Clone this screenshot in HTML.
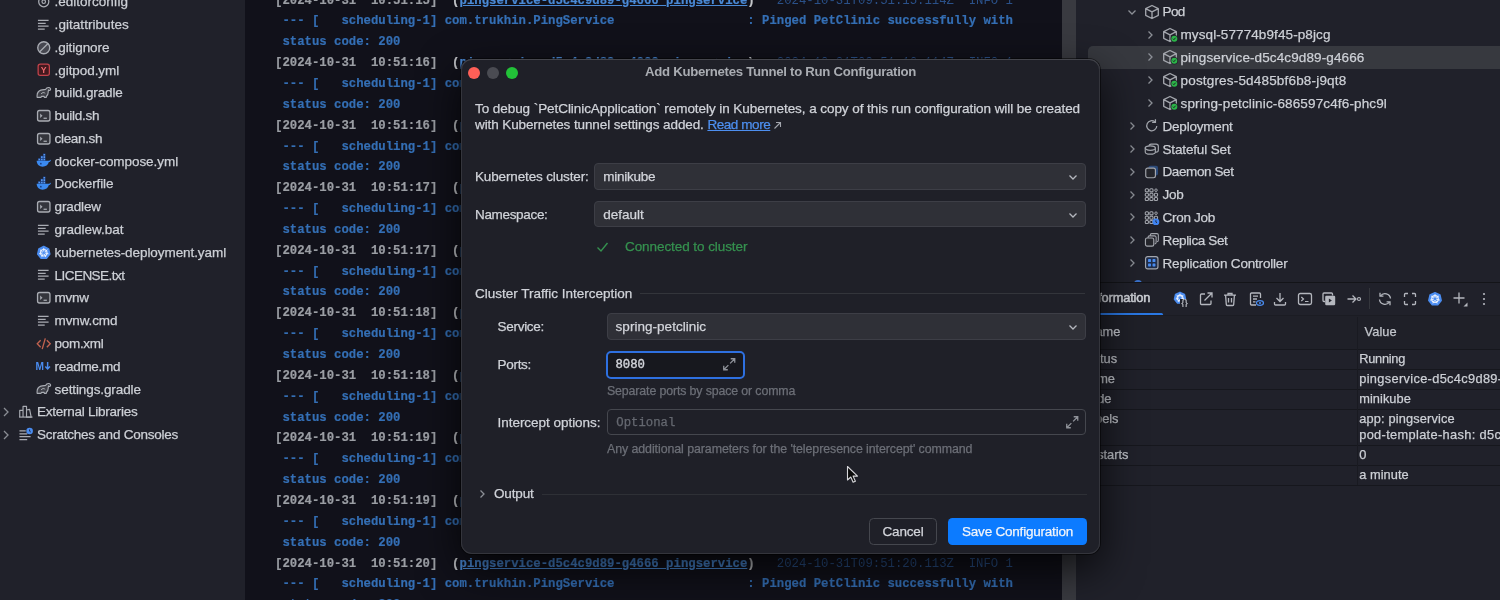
<!DOCTYPE html>
<html><head><meta charset="utf-8"><title>Add Kubernetes Tunnel to Run Configuration</title>
<style>
*{box-sizing:border-box;margin:0;padding:0}
html,body{width:1500px;height:600px;overflow:hidden;background:#11111a;font-family:"Liberation Sans",sans-serif;color:#c9ccd2}
#left{position:absolute;left:0;top:0;width:245px;height:600px;background:#20212a;overflow:hidden}
#con{position:absolute;left:245px;top:0;width:818px;height:600px;background:#11111a;overflow:hidden}
#sb{position:absolute;left:1062px;top:0;width:14px;height:600px;background:#393a40}
#right{position:absolute;left:1076px;top:0;width:425px;height:600px;background:#20212a;overflow:hidden}
.fr{position:absolute;height:23px;line-height:23px;font-size:13.3px;color:#c5c8ce;white-space:nowrap}
.fi{position:absolute;left:36.25px;width:15.5px;height:15.5px}
.cl{position:absolute;left:30px;height:21px;line-height:21px;font-family:"Liberation Mono",monospace;font-size:12.31px;white-space:pre;font-weight:bold}
.cl.a{color:#9b9ea4}
.cl.b{color:#346fb5}
.cl .p{color:#c4c6ca}
.cl .l{color:#4a8ad6;text-decoration:underline}
.cl .d{color:#346fb5}
#dlg{position:absolute;left:461px;top:59px;width:639px;height:495px;background:#1f2028;border-radius:11px;box-shadow:0 1px 0 #44454c inset,0 0 0 1px #34353c inset,0 0 0 1px rgba(0,0,0,.5),0 15px 43px rgba(0,0,0,.75)}
.t{position:absolute;height:20px;line-height:20px;white-space:pre}
#left,#con,#right,#dlg,#sb{will-change:transform}
.t{-webkit-text-stroke:0.25px}
.cl{-webkit-text-stroke:0.2px}
.cl .d{font-weight:normal;-webkit-text-stroke:0;color:#2a5088}

</style></head><body>
<div id="left">
<svg class="fi" style="top:-6.0px" viewBox="0 0 16 16"><circle cx="8" cy="8" r="5.2" stroke="#a9acb3" stroke-width="1.3" fill="none"/><circle cx="8" cy="8" r="1.8" stroke="#a9acb3" stroke-width="1.2" fill="none"/></svg>
<span class="t" style="left:54.6px;top:-7.8px;font-size:13.5px;color:#cdd0d6;letter-spacing:-0.003px;">.editorconfig</span>
<svg class="fi" style="top:16.7px" viewBox="0 0 16 16"><path d="M2 3.5h11M2 6.5h8M2 9.5h11M2 12.5h7" stroke="#a9acb3" stroke-width="1.3" fill="none"/></svg>
<span class="t" style="left:54.6px;top:15.0px;font-size:13.5px;color:#cdd0d6;letter-spacing:0.051px;">.gitattributes</span>
<svg class="fi" style="top:39.5px" viewBox="0 0 16 16"><circle cx="8" cy="8" r="6.200" stroke="#a9acb3" stroke-width="1.400" fill="rgba(169,172,179,.28)"/><path d="M3.600 12.400L12.400 3.600" stroke="#a9acb3" stroke-width="1.3"/></svg>
<span class="t" style="left:54.6px;top:37.8px;font-size:13.5px;color:#cdd0d6;letter-spacing:-0.079px;">.gitignore</span>
<svg class="fi" style="top:62.3px" viewBox="0 0 16 16"><rect x="2.200" y="2.200" width="11.600" height="11.600" rx="2.200" fill="#43191e" stroke="#c2434b" stroke-width="1.300"/><text x="8" y="11.300" font-family="Liberation Sans,sans-serif" font-size="9" font-weight="bold" fill="#ee6a70" text-anchor="middle">Y</text></svg>
<span class="t" style="left:54.6px;top:60.5px;font-size:13.5px;color:#cdd0d6;letter-spacing:-0.071px;">.gitpod.yml</span>
<svg class="fi" style="top:85.1px" viewBox="0 0 16 16"><path d="M1.200 12.800C.8 9.500 1.800 6.400 5 5.300c1.800-.6 3.500-.4 4.800-.6.800-1.500 2.200-2.300 3.600-2.100 1.400.3 2 1.600 1.400 2.600-.4.700-1.400.6-1.600-.2l-.6 1.400c.2 2.100-.6 4.100-1.800 5.200l-.2 1.200H8.600l-.2-1H5.600l-.4 1z" stroke="#a9acb3" stroke-width="1.150" fill="rgba(169,172,179,.22)" stroke-linejoin="round"/><path d="M5.300 9.300c.8-1.700 3-2 4.200-.7" stroke="#a9acb3" stroke-width="1" fill="none"/></svg>
<span class="t" style="left:54.6px;top:83.3px;font-size:13.5px;color:#cdd0d6;letter-spacing:-0.150px;">build.gradle</span>
<svg class="fi" style="top:107.9px" viewBox="0 0 16 16"><rect x="1.6" y="2.600" width="12.8" height="10.8" rx="2" stroke="#a9acb3" stroke-width="1.350" fill="#34353c"/><path d="M4.300 5.800l2.400 2.200-2.400 2.200z" fill="#a9acb3"/><path d="M7.800 10.600h3.400" stroke="#a9acb3" stroke-width="1.300" fill="none"/></svg>
<span class="t" style="left:54.6px;top:106.1px;font-size:13.5px;color:#cdd0d6;letter-spacing:-0.223px;">build.sh</span>
<svg class="fi" style="top:130.6px" viewBox="0 0 16 16"><rect x="1.6" y="2.600" width="12.8" height="10.8" rx="2" stroke="#a9acb3" stroke-width="1.350" fill="#34353c"/><path d="M4.300 5.800l2.400 2.200-2.400 2.200z" fill="#a9acb3"/><path d="M7.800 10.600h3.400" stroke="#a9acb3" stroke-width="1.300" fill="none"/></svg>
<span class="t" style="left:54.6px;top:128.9px;font-size:13.5px;color:#cdd0d6;letter-spacing:-0.348px;">clean.sh</span>
<svg class="fi" style="top:153.4px" viewBox="0 0 16 16"><path d="M2 5.400h7.800v2.800H2zM4.600 2.900h5.200v2.600H4.600zM7.200 0.600h2.600v2.500H7.200z" fill="#1c3f80"/><path d="M2.600 5.900h1.600v1.700H2.600zM5.200 5.900h1.600v1.700H5.200zM7.800 5.900h1.600v1.700H7.800zM5.200 3.400h1.600v1.700H5.200zM7.800 3.400h1.600v1.700H7.800zM7.800 1h1.600v1.700H7.800z" fill="#5a98ee"/><path d="M0.600 8.100h11.800c.9 0 1.700-.4 2.300-1 .2-.2.600-.1.600.3-.2 1.100-1 1.800-2 2-.9 3.200-3.200 4.700-6.400 4.700-3.400 0-5.700-1.700-6.300-6z" fill="#3b8af0"/><circle cx="5" cy="11" r=".9" fill="#1c3f80"/></svg>
<span class="t" style="left:54.6px;top:151.7px;font-size:13.5px;color:#cdd0d6;letter-spacing:-0.058px;">docker-compose.yml</span>
<svg class="fi" style="top:176.2px" viewBox="0 0 16 16"><path d="M2 5.400h7.800v2.800H2zM4.600 2.900h5.200v2.600H4.600zM7.200 0.600h2.600v2.500H7.200z" fill="#1c3f80"/><path d="M2.600 5.900h1.600v1.700H2.600zM5.200 5.900h1.600v1.700H5.200zM7.800 5.900h1.600v1.700H7.800zM5.200 3.400h1.600v1.700H5.200zM7.800 3.400h1.600v1.700H7.800zM7.800 1h1.600v1.700H7.800z" fill="#5a98ee"/><path d="M0.600 8.100h11.800c.9 0 1.700-.4 2.300-1 .2-.2.600-.1.600.3-.2 1.100-1 1.800-2 2-.9 3.200-3.200 4.700-6.400 4.700-3.400 0-5.700-1.700-6.300-6z" fill="#3b8af0"/><circle cx="5" cy="11" r=".9" fill="#1c3f80"/></svg>
<span class="t" style="left:54.6px;top:174.4px;font-size:13.5px;color:#cdd0d6;letter-spacing:-0.127px;">Dockerfile</span>
<svg class="fi" style="top:199.0px" viewBox="0 0 16 16"><rect x="1.6" y="2.600" width="12.8" height="10.8" rx="2" stroke="#a9acb3" stroke-width="1.350" fill="#34353c"/><path d="M4.300 5.800l2.400 2.200-2.400 2.200z" fill="#a9acb3"/><path d="M7.800 10.600h3.400" stroke="#a9acb3" stroke-width="1.300" fill="none"/></svg>
<span class="t" style="left:54.6px;top:197.2px;font-size:13.5px;color:#cdd0d6;letter-spacing:-0.147px;">gradlew</span>
<svg class="fi" style="top:221.8px" viewBox="0 0 16 16"><path d="M2 3.5h11M2 6.5h8M2 9.5h11M2 12.5h7" stroke="#a9acb3" stroke-width="1.3" fill="none"/></svg>
<span class="t" style="left:54.6px;top:220.0px;font-size:13.5px;color:#cdd0d6;letter-spacing:-0.005px;">gradlew.bat</span>
<svg class="fi" style="top:244.5px" viewBox="0 0 16 16"><polygon points="8.00,1.60 13.00,4.01 14.24,9.42 10.78,13.77 5.22,13.77 1.76,9.42 3.00,4.01" fill="#4a8cf0" stroke="#4a8cf0" stroke-width="1.600" stroke-linejoin="round"/><circle cx="8" cy="8" r="3.33" stroke="#e9f0fc" stroke-width="1.200" fill="none"/><path d="M8.00 6.70L8.00 3.01M9.02 7.19L11.90 4.89M9.27 8.29L12.87 9.11M8.56 9.17L10.17 12.50M7.44 9.17L5.83 12.50M6.73 8.29L3.13 9.11M6.98 7.19L4.10 4.89" stroke="#e9f0fc" stroke-width="1"/></svg>
<span class="t" style="left:54.6px;top:242.8px;font-size:13.5px;color:#cdd0d6;letter-spacing:-0.071px;">kubernetes-deployment.yaml</span>
<svg class="fi" style="top:267.3px" viewBox="0 0 16 16"><path d="M2 3.5h11M2 6.5h8M2 9.5h11M2 12.5h7" stroke="#a9acb3" stroke-width="1.3" fill="none"/></svg>
<span class="t" style="left:54.6px;top:265.6px;font-size:13.5px;color:#cdd0d6;letter-spacing:-0.548px;">LICENSE.txt</span>
<svg class="fi" style="top:290.1px" viewBox="0 0 16 16"><rect x="1.6" y="2.600" width="12.8" height="10.8" rx="2" stroke="#a9acb3" stroke-width="1.350" fill="#34353c"/><path d="M4.300 5.800l2.400 2.200-2.400 2.200z" fill="#a9acb3"/><path d="M7.800 10.600h3.400" stroke="#a9acb3" stroke-width="1.300" fill="none"/></svg>
<span class="t" style="left:54.6px;top:288.3px;font-size:13.5px;color:#cdd0d6;letter-spacing:-0.251px;">mvnw</span>
<svg class="fi" style="top:312.9px" viewBox="0 0 16 16"><path d="M2 3.5h11M2 6.5h8M2 9.5h11M2 12.5h7" stroke="#a9acb3" stroke-width="1.3" fill="none"/></svg>
<span class="t" style="left:54.6px;top:311.1px;font-size:13.5px;color:#cdd0d6;letter-spacing:-0.127px;">mvnw.cmd</span>
<svg class="fi" style="top:335.7px" viewBox="0 0 16 16"><path d="M4.800 4.300L1.300 8l3.500 3.700M11.200 4.300L14.700 8l-3.500 3.700M9.600 2.500L6.400 13.500" stroke="#c0624f" stroke-width="1.4" fill="none"/></svg>
<span class="t" style="left:54.6px;top:333.9px;font-size:13.5px;color:#cdd0d6;letter-spacing:-0.323px;">pom.xml</span>
<svg class="fi" style="top:358.4px" viewBox="0 0 16 16"><text x="-0.500" y="12" font-family="Liberation Sans,sans-serif" font-size="10.5" font-weight="bold" fill="#4a8cf0">M</text><path d="M12 4v7.200M9.600 8.800l2.400 2.600 2.400-2.600" stroke="#4a8cf0" stroke-width="1.500" fill="none"/></svg>
<span class="t" style="left:54.6px;top:356.7px;font-size:13.5px;color:#cdd0d6;letter-spacing:-0.309px;">readme.md</span>
<svg class="fi" style="top:381.2px" viewBox="0 0 16 16"><path d="M1.200 12.800C.8 9.500 1.800 6.400 5 5.300c1.800-.6 3.500-.4 4.800-.6.800-1.500 2.200-2.300 3.600-2.100 1.400.3 2 1.600 1.400 2.600-.4.700-1.400.6-1.600-.2l-.6 1.400c.2 2.100-.6 4.100-1.800 5.200l-.2 1.200H8.600l-.2-1H5.600l-.4 1z" stroke="#a9acb3" stroke-width="1.150" fill="rgba(169,172,179,.22)" stroke-linejoin="round"/><path d="M5.300 9.300c.8-1.700 3-2 4.200-.7" stroke="#a9acb3" stroke-width="1" fill="none"/></svg>
<span class="t" style="left:54.6px;top:379.5px;font-size:13.5px;color:#cdd0d6;letter-spacing:-0.104px;">settings.gradle</span>
<svg class="fi" style="left:18.300px;top:404.0px" viewBox="0 0 16 16"><path d="M1.800 13.500V6.500h3.400v7M5.200 13.500V2.500h3.600v11M8.800 13.500V6.200l3.200-.6 1.600 7.900z" stroke="#a9acb3" stroke-width="1.200" fill="none" stroke-linejoin="round"/><path d="M1 13.500h14" stroke="#a9acb3" stroke-width="1.200"/></svg>
<span class="t" style="left:37.0px;top:402.2px;font-size:13.5px;color:#cdd0d6;letter-spacing:-0.253px;">External Libraries</span>
<svg style="position:absolute;left:1px;top:406.74px;width:10px;height:10px" viewBox="0 0 10 10"><path d="M3 1l4 4-4 4" stroke="#8a8d94" stroke-width="1.300" fill="none"/></svg>
<svg class="fi" style="left:18.300px;top:426.8px" viewBox="0 0 16 16"><path d="M1.500 4h6.500M1.500 7h8M1.500 10h11.500M1.500 13h8" stroke="#a9acb3" stroke-width="1.300" fill="none"/><circle cx="12" cy="4.200" r="3.400" fill="#4a8cf0"/><path d="M12 2.500v1.900l1.200.8" stroke="#20212a" stroke-width=".9" fill="none"/></svg>
<span class="t" style="left:37.0px;top:425.0px;font-size:13.5px;color:#cdd0d6;letter-spacing:-0.242px;">Scratches and Consoles</span>
<svg style="position:absolute;left:1px;top:429.52000000000004px;width:10px;height:10px" viewBox="0 0 10 10"><path d="M3 1l4 4-4 4" stroke="#8a8d94" stroke-width="1.300" fill="none"/></svg>
</div>
<div id="con">
<div class="cl a" style="top:-9.5px">[2024-10-31  10:51:15]  <span class="p">(</span><span class="l">pingservice-d5c4c9d89-g4666 pingservice</span><span class="p">)</span>   <span class="d">2024-10-31T09:51:15.114Z  INFO 1</span></div>
<div class="cl b" style="top:11.4px"> --- [   scheduling-1] com.trukhin.PingService                  : Pinged PetClinic successfully with</div>
<div class="cl b" style="top:32.2px"> status code: 200</div>
<div class="cl a" style="top:53.1px">[2024-10-31  10:51:16]  <span class="p">(</span><span class="l">pingservice-d5c4c9d89-g4666 pingservice</span><span class="p">)</span>   <span class="d">2024-10-31T09:51:16.114Z  INFO 1</span></div>
<div class="cl b" style="top:73.9px"> --- [   scheduling-1] com.trukhin.PingService                  : Pinged PetClinic successfully with</div>
<div class="cl b" style="top:94.8px"> status code: 200</div>
<div class="cl a" style="top:115.6px">[2024-10-31  10:51:16]  <span class="p">(</span><span class="l">pingservice-d5c4c9d89-g4666 pingservice</span><span class="p">)</span>   <span class="d">2024-10-31T09:51:16.114Z  INFO 1</span></div>
<div class="cl b" style="top:136.5px"> --- [   scheduling-1] com.trukhin.PingService                  : Pinged PetClinic successfully with</div>
<div class="cl b" style="top:157.3px"> status code: 200</div>
<div class="cl a" style="top:178.2px">[2024-10-31  10:51:17]  <span class="p">(</span><span class="l">pingservice-d5c4c9d89-g4666 pingservice</span><span class="p">)</span>   <span class="d">2024-10-31T09:51:17.114Z  INFO 1</span></div>
<div class="cl b" style="top:199.0px"> --- [   scheduling-1] com.trukhin.PingService                  : Pinged PetClinic successfully with</div>
<div class="cl b" style="top:219.9px"> status code: 200</div>
<div class="cl a" style="top:240.7px">[2024-10-31  10:51:17]  <span class="p">(</span><span class="l">pingservice-d5c4c9d89-g4666 pingservice</span><span class="p">)</span>   <span class="d">2024-10-31T09:51:17.114Z  INFO 1</span></div>
<div class="cl b" style="top:261.6px"> --- [   scheduling-1] com.trukhin.PingService                  : Pinged PetClinic successfully with</div>
<div class="cl b" style="top:282.4px"> status code: 200</div>
<div class="cl a" style="top:303.2px">[2024-10-31  10:51:18]  <span class="p">(</span><span class="l">pingservice-d5c4c9d89-g4666 pingservice</span><span class="p">)</span>   <span class="d">2024-10-31T09:51:18.114Z  INFO 1</span></div>
<div class="cl b" style="top:324.1px"> --- [   scheduling-1] com.trukhin.PingService                  : Pinged PetClinic successfully with</div>
<div class="cl b" style="top:344.9px"> status code: 200</div>
<div class="cl a" style="top:365.8px">[2024-10-31  10:51:18]  <span class="p">(</span><span class="l">pingservice-d5c4c9d89-g4666 pingservice</span><span class="p">)</span>   <span class="d">2024-10-31T09:51:18.114Z  INFO 1</span></div>
<div class="cl b" style="top:386.7px"> --- [   scheduling-1] com.trukhin.PingService                  : Pinged PetClinic successfully with</div>
<div class="cl b" style="top:407.5px"> status code: 200</div>
<div class="cl a" style="top:428.4px">[2024-10-31  10:51:19]  <span class="p">(</span><span class="l">pingservice-d5c4c9d89-g4666 pingservice</span><span class="p">)</span>   <span class="d">2024-10-31T09:51:19.114Z  INFO 1</span></div>
<div class="cl b" style="top:449.2px"> --- [   scheduling-1] com.trukhin.PingService                  : Pinged PetClinic successfully with</div>
<div class="cl b" style="top:470.1px"> status code: 200</div>
<div class="cl a" style="top:490.9px">[2024-10-31  10:51:19]  <span class="p">(</span><span class="l">pingservice-d5c4c9d89-g4666 pingservice</span><span class="p">)</span>   <span class="d">2024-10-31T09:51:19.114Z  INFO 1</span></div>
<div class="cl b" style="top:511.8px"> --- [   scheduling-1] com.trukhin.PingService                  : Pinged PetClinic successfully with</div>
<div class="cl b" style="top:532.6px"> status code: 200</div>
<div class="cl a" style="top:553.5px">[2024-10-31  10:51:20]  <span class="p">(</span><span class="l">pingservice-d5c4c9d89-g4666 pingservice</span><span class="p">)</span>   <span class="d">2024-10-31T09:51:20.113Z  INFO 1</span></div>
<div class="cl b" style="top:574.3px"> --- [   scheduling-1] com.trukhin.PingService                  : Pinged PetClinic successfully with</div>
<div class="cl b" style="top:595.2px"> status code: 200</div>
</div>
<div id="sb"></div>
<div id="right">
<div style="position:absolute;left:-1076px;top:0">
<div style="position:absolute;left:1088px;top:46px;width:420px;height:23px;background:#37393f;border-radius:5px 0 0 5px"></div>
<svg style="position:absolute;left:1126.7px;top:6.7px;width:10px;height:10px" viewBox="0 0 10 10"><path d="M1.5 3.500l3.500 3.500 3.500-3.500" stroke="#8c8f96" stroke-width="1.300" fill="none"/></svg>
<svg style="position:absolute;left:1144.2px;top:3.7px;width:16px;height:16px" viewBox="0 0 16 16"><path d="M8 1.500l6.300 3.200v6.600L8 14.500l-6.300-3.200V4.700z M1.700 4.700L8 7.900l6.300-3.200M8 7.900v6.600" stroke="#a3a6ad" stroke-width="1.350" fill="none" stroke-linejoin="round"/></svg>
<span class="t" style="left:1162.5px;top:2.4px;font-size:13.5px;color:#cdd0d6;letter-spacing:-0.607px;">Pod</span>
<svg style="position:absolute;left:1144.7px;top:29.5px;width:10px;height:10px" viewBox="0 0 10 10"><path d="M3.500 1.500l3.500 3.500-3.500 3.500" stroke="#8c8f96" stroke-width="1.300" fill="none"/></svg>
<svg style="position:absolute;left:1162.2px;top:26.5px;width:16px;height:16px" viewBox="0 0 16 16"><path d="M8 1.500l6.300 3.200v6.600L8 14.500l-6.300-3.200V4.700z M1.700 4.700L8 7.900l6.300-3.200M8 7.900v6.600" stroke="#a3a6ad" stroke-width="1.350" fill="none" stroke-linejoin="round"/><circle cx="12.300" cy="11.700" r="3.700" fill="#20212a"/><circle cx="12.300" cy="11.700" r="3" fill="#2bb548"/><path d="M10.900 11.700l1 1 1.700-2" stroke="#20212a" stroke-width="1" fill="none"/></svg>
<span class="t" style="left:1180.5px;top:25.2px;font-size:13.5px;color:#cdd0d6;letter-spacing:0.098px;">mysql-57774b9f45-p8jcg</span>
<svg style="position:absolute;left:1144.7px;top:52.4px;width:10px;height:10px" viewBox="0 0 10 10"><path d="M3.500 1.500l3.500 3.500-3.500 3.500" stroke="#8c8f96" stroke-width="1.300" fill="none"/></svg>
<svg style="position:absolute;left:1162.2px;top:49.4px;width:16px;height:16px" viewBox="0 0 16 16"><path d="M8 1.500l6.300 3.200v6.600L8 14.500l-6.300-3.200V4.700z M1.700 4.700L8 7.900l6.300-3.200M8 7.900v6.600" stroke="#a3a6ad" stroke-width="1.350" fill="none" stroke-linejoin="round"/><circle cx="12.300" cy="11.700" r="3.700" fill="#20212a"/><circle cx="12.300" cy="11.700" r="3" fill="#2bb548"/><path d="M10.900 11.700l1 1 1.700-2" stroke="#20212a" stroke-width="1" fill="none"/></svg>
<span class="t" style="left:1180.5px;top:48.1px;font-size:13.5px;color:#cdd0d6;letter-spacing:0.112px;">pingservice-d5c4c9d89-g4666</span>
<svg style="position:absolute;left:1144.7px;top:75.3px;width:10px;height:10px" viewBox="0 0 10 10"><path d="M3.500 1.500l3.500 3.500-3.500 3.500" stroke="#8c8f96" stroke-width="1.300" fill="none"/></svg>
<svg style="position:absolute;left:1162.2px;top:72.3px;width:16px;height:16px" viewBox="0 0 16 16"><path d="M8 1.500l6.300 3.200v6.600L8 14.500l-6.300-3.200V4.700z M1.700 4.700L8 7.900l6.300-3.200M8 7.900v6.600" stroke="#a3a6ad" stroke-width="1.350" fill="none" stroke-linejoin="round"/><circle cx="12.300" cy="11.700" r="3.700" fill="#20212a"/><circle cx="12.300" cy="11.700" r="3" fill="#2bb548"/><path d="M10.900 11.700l1 1 1.700-2" stroke="#20212a" stroke-width="1" fill="none"/></svg>
<span class="t" style="left:1180.5px;top:71.0px;font-size:13.5px;color:#cdd0d6;letter-spacing:0.181px;">postgres-5d485bf6b8-j9qt8</span>
<svg style="position:absolute;left:1144.7px;top:98.1px;width:10px;height:10px" viewBox="0 0 10 10"><path d="M3.500 1.500l3.500 3.500-3.500 3.500" stroke="#8c8f96" stroke-width="1.300" fill="none"/></svg>
<svg style="position:absolute;left:1162.2px;top:95.1px;width:16px;height:16px" viewBox="0 0 16 16"><path d="M8 1.500l6.300 3.200v6.600L8 14.500l-6.300-3.200V4.700z M1.700 4.700L8 7.900l6.300-3.200M8 7.900v6.600" stroke="#a3a6ad" stroke-width="1.350" fill="none" stroke-linejoin="round"/><circle cx="12.300" cy="11.700" r="3.700" fill="#20212a"/><circle cx="12.300" cy="11.700" r="3" fill="#2bb548"/><path d="M10.900 11.700l1 1 1.700-2" stroke="#20212a" stroke-width="1" fill="none"/></svg>
<span class="t" style="left:1180.5px;top:93.8px;font-size:13.5px;color:#cdd0d6;letter-spacing:0.140px;">spring-petclinic-686597c4f6-phc9l</span>
<svg style="position:absolute;left:1126.7px;top:121.0px;width:10px;height:10px" viewBox="0 0 10 10"><path d="M3.500 1.500l3.500 3.500-3.500 3.500" stroke="#8c8f96" stroke-width="1.300" fill="none"/></svg>
<svg style="position:absolute;left:1144.0px;top:118.2px;width:15.5px;height:15.5px" viewBox="0 0 16 16"><path d="M13.200 8.300a5.200 5.200 0 1 1-1.900-4.300" stroke="#a3a6ad" stroke-width="1.300" fill="none"/><path d="M11.800 1.200v3.400H8.400" stroke="#a3a6ad" stroke-width="1.300" fill="none"/></svg>
<span class="t" style="left:1162.5px;top:116.7px;font-size:13.5px;color:#cdd0d6;letter-spacing:-0.204px;">Deployment</span>
<svg style="position:absolute;left:1126.7px;top:143.8px;width:10px;height:10px" viewBox="0 0 10 10"><path d="M3.500 1.500l3.500 3.500-3.500 3.500" stroke="#8c8f96" stroke-width="1.300" fill="none"/></svg>
<svg style="position:absolute;left:1144.0px;top:141.1px;width:15.5px;height:15.5px" viewBox="0 0 16 16"><rect x="5.200" y="3.200" width="9.600" height="8.200" rx="2.200" stroke="#a3a6ad" stroke-width="1.200" fill="none"/><path d="M1.300 7.300v4c0 1.300 2.300 2.300 5.200 2.300s5.200-1 5.200-2.300v-4z" fill="#20212a" stroke="#a3a6ad" stroke-width="1.200"/><ellipse cx="6.500" cy="7.300" rx="5.200" ry="2.300" stroke="#a3a6ad" stroke-width="1.200" fill="#20212a"/></svg>
<span class="t" style="left:1162.5px;top:139.5px;font-size:13.5px;color:#cdd0d6;letter-spacing:-0.150px;">Stateful Set</span>
<svg style="position:absolute;left:1126.7px;top:166.7px;width:10px;height:10px" viewBox="0 0 10 10"><path d="M3.500 1.500l3.500 3.500-3.500 3.500" stroke="#8c8f96" stroke-width="1.300" fill="none"/></svg>
<svg style="position:absolute;left:1144.0px;top:163.9px;width:15.5px;height:15.5px" viewBox="0 0 16 16"><rect x="4.500" y="1.800" width="10" height="10" rx="2" fill="#2c4a78"/><rect x="1.800" y="4.200" width="10" height="10" rx="2" stroke="#a3a6ad" stroke-width="1.200" fill="#25262c"/></svg>
<span class="t" style="left:1162.5px;top:162.3px;font-size:13.5px;color:#cdd0d6;letter-spacing:-0.404px;">Daemon Set</span>
<svg style="position:absolute;left:1126.7px;top:189.5px;width:10px;height:10px" viewBox="0 0 10 10"><path d="M3.500 1.500l3.500 3.500-3.500 3.500" stroke="#8c8f96" stroke-width="1.300" fill="none"/></svg>
<svg style="position:absolute;left:1144.0px;top:186.8px;width:15.5px;height:15.5px" viewBox="0 0 16 16"><rect x="1.3" y="1.9" width="3.300" height="3.100" rx="1" stroke="#a3a6ad" stroke-width="1.100" fill="none"/><rect x="6.0" y="1.9" width="3.300" height="3.100" rx="1" stroke="#a3a6ad" stroke-width="1.100" fill="none"/><rect x="1.3" y="6.4" width="3.300" height="3.100" rx="1" stroke="#a3a6ad" stroke-width="1.100" fill="none"/><rect x="6.0" y="6.4" width="3.300" height="3.100" rx="1" stroke="#a3a6ad" stroke-width="1.100" fill="none"/><rect x="10.7" y="6.4" width="3.300" height="3.100" rx="1" stroke="#a3a6ad" stroke-width="1.100" fill="none"/><rect x="1.3" y="10.9" width="3.300" height="3.100" rx="1" stroke="#a3a6ad" stroke-width="1.100" fill="none"/><rect x="6.0" y="10.9" width="3.300" height="3.100" rx="1" stroke="#a3a6ad" stroke-width="1.100" fill="none"/><rect x="10.7" y="10.9" width="3.300" height="3.100" rx="1" stroke="#a3a6ad" stroke-width="1.100" fill="none"/><circle cx="12.400" cy="3.300" r="1.300" stroke="#a3a6ad" stroke-width="1" fill="none"/></svg>
<span class="t" style="left:1162.5px;top:185.2px;font-size:13.5px;color:#cdd0d6;letter-spacing:-0.255px;">Job</span>
<svg style="position:absolute;left:1126.7px;top:212.3px;width:10px;height:10px" viewBox="0 0 10 10"><path d="M3.500 1.500l3.500 3.500-3.500 3.500" stroke="#8c8f96" stroke-width="1.300" fill="none"/></svg>
<svg style="position:absolute;left:1144.0px;top:209.6px;width:15.5px;height:15.5px" viewBox="0 0 16 16"><rect x="1.3" y="1.9" width="3.300" height="3.100" rx="1" stroke="#a3a6ad" stroke-width="1.100" fill="none"/><rect x="6.0" y="1.9" width="3.300" height="3.100" rx="1" stroke="#a3a6ad" stroke-width="1.100" fill="none"/><rect x="1.3" y="6.4" width="3.300" height="3.100" rx="1" stroke="#a3a6ad" stroke-width="1.100" fill="none"/><rect x="6.0" y="6.4" width="3.300" height="3.100" rx="1" stroke="#a3a6ad" stroke-width="1.100" fill="none"/><rect x="10.7" y="6.4" width="3.300" height="3.100" rx="1" stroke="#a3a6ad" stroke-width="1.100" fill="none"/><rect x="1.3" y="10.9" width="3.300" height="3.100" rx="1" stroke="#a3a6ad" stroke-width="1.100" fill="none"/><rect x="6.0" y="10.9" width="3.300" height="3.100" rx="1" stroke="#a3a6ad" stroke-width="1.100" fill="none"/><circle cx="12.400" cy="3.300" r="1.300" stroke="#a3a6ad" stroke-width="1" fill="none"/><circle cx="12.300" cy="12.300" r="3.500" fill="#3f83f0"/><path d="M12.300 10.600v1.900l1.100.7" stroke="#20212a" stroke-width=".9" fill="none"/></svg>
<span class="t" style="left:1162.5px;top:208.0px;font-size:13.5px;color:#cdd0d6;letter-spacing:-0.285px;">Cron Job</span>
<svg style="position:absolute;left:1126.7px;top:235.2px;width:10px;height:10px" viewBox="0 0 10 10"><path d="M3.500 1.500l3.500 3.500-3.500 3.500" stroke="#8c8f96" stroke-width="1.300" fill="none"/></svg>
<svg style="position:absolute;left:1144.0px;top:232.4px;width:15.5px;height:15.5px" viewBox="0 0 16 16"><path d="M6.500 4V3.200a1.500 1.500 0 0 1 1.500-1.500h5.300a1.500 1.500 0 0 1 1.500 1.500v5.300a1.500 1.500 0 0 1-1.500 1.500" stroke="#a3a6ad" stroke-width="1.100" fill="none"/><path d="M4.200 6.200V5.500a1.500 1.500 0 0 1 1.500-1.500h5.300a1.500 1.500 0 0 1 1.500 1.500v5.300a1.500 1.500 0 0 1-1.500 1.500" stroke="#a3a6ad" stroke-width="1.100" fill="none"/><rect x="1.500" y="6.200" width="8.600" height="8.300" rx="1.700" stroke="#a3a6ad" stroke-width="1.200" fill="#25262c"/></svg>
<span class="t" style="left:1162.5px;top:230.9px;font-size:13.5px;color:#cdd0d6;letter-spacing:-0.367px;">Replica Set</span>
<svg style="position:absolute;left:1126.7px;top:258.1px;width:10px;height:10px" viewBox="0 0 10 10"><path d="M3.500 1.500l3.500 3.500-3.500 3.500" stroke="#8c8f96" stroke-width="1.300" fill="none"/></svg>
<svg style="position:absolute;left:1144.0px;top:255.3px;width:15.5px;height:15.5px" viewBox="0 0 16 16"><rect x="1.600" y="1.600" width="12.800" height="12.800" rx="2.200" stroke="#a3a6ad" stroke-width="1.200" fill="#1f2d4a"/><rect x="4.200" y="4.200" width="3" height="3" rx=".6" fill="#4a8cf0"/><rect x="8.800" y="4.200" width="3" height="3" rx=".6" fill="#4a8cf0"/><rect x="4.200" y="8.800" width="3" height="3" rx=".6" fill="#4a8cf0"/><rect x="8.800" y="8.800" width="3" height="3" rx=".6" fill="#4a8cf0"/></svg>
<span class="t" style="left:1162.5px;top:253.8px;font-size:13.5px;color:#cdd0d6;letter-spacing:-0.185px;">Replication Controller</span>
<div style="position:absolute;left:1134px;top:279.500px;width:8px;height:4px;border-radius:4px 4px 0 0;background:#3a72cc"></div>
<div style="position:absolute;left:1075px;top:282px;width:425px;height:318px;background:#20212a;border-top:1px solid #131418"></div>
<span class="t" style="left:1087.8px;top:287.8px;font-size:12.8px;color:#cfd2d8;letter-spacing:-0.148px;-webkit-text-stroke:0.5px;">Information</span>
<div style="position:absolute;left:1076px;top:312.700px;width:86.500px;height:3.400px;background:#2a78e4;border-radius:2px"></div>
<div style="position:absolute;left:1075px;top:315px;width:425px;height:1px;background:#1b1c23"></div>
<div style="position:absolute;left:1075px;top:316px;width:425px;height:33px;background:#1f2028"></div>
<div style="position:absolute;left:1075px;top:348.5px;width:425px;height:1px;background:#16171d"></div>
<div style="position:absolute;left:1075px;top:368.6px;width:425px;height:1px;background:#16171d"></div>
<div style="position:absolute;left:1075px;top:388.8px;width:425px;height:1px;background:#16171d"></div>
<div style="position:absolute;left:1075px;top:408.6px;width:425px;height:1px;background:#16171d"></div>
<div style="position:absolute;left:1075px;top:444.9px;width:425px;height:1px;background:#16171d"></div>
<div style="position:absolute;left:1075px;top:464.7px;width:425px;height:1px;background:#16171d"></div>
<div style="position:absolute;left:1075px;top:484.5px;width:425px;height:1px;background:#16171d"></div>
<div style="position:absolute;left:1357px;top:317px;width:1px;height:168px;background:#191a21"></div>
<span class="t" style="left:1086.2px;top:322.3px;font-size:12.8px;color:#c3c6cc;">Name</span>
<span class="t" style="left:1364.6px;top:322.3px;font-size:12.8px;color:#c3c6cc;letter-spacing:0.042px;">Value</span>
<span class="t" style="left:1080.8px;top:349.2px;font-size:12.8px;color:#c3c6cc;">Status</span>
<span class="t" style="left:1359.2px;top:349.2px;font-size:12.8px;color:#cdd0d6;letter-spacing:-0.255px;">Running</span>
<span class="t" style="left:1080.8px;top:369.0px;font-size:12.8px;color:#c3c6cc;">Name</span>
<span class="t" style="left:1359.2px;top:369.0px;font-size:12.8px;color:#cdd0d6;letter-spacing:0.334px;">pingservice-d5c4c9d89-g4666</span>
<span class="t" style="left:1080.8px;top:388.8px;font-size:12.8px;color:#c3c6cc;">Node</span>
<span class="t" style="left:1359.2px;top:388.8px;font-size:12.8px;color:#cdd0d6;letter-spacing:0.059px;">minikube</span>
<span class="t" style="left:1080.8px;top:408.6px;font-size:12.8px;color:#c3c6cc;">Labels</span>
<span class="t" style="left:1359.2px;top:408.6px;font-size:12.8px;color:#cdd0d6;letter-spacing:0.155px;">app: pingservice</span>
<span class="t" style="left:1359.2px;top:424.6px;font-size:12.8px;color:#cdd0d6;letter-spacing:0.340px;">pod-template-hash: d5c4c9d89</span>
<span class="t" style="left:1080.8px;top:444.8px;font-size:12.8px;color:#c3c6cc;">Restarts</span>
<span class="t" style="left:1359.2px;top:444.8px;font-size:12.8px;color:#cdd0d6;letter-spacing:0.051px;">0</span>
<span class="t" style="left:1359.2px;top:464.6px;font-size:12.8px;color:#cdd0d6;letter-spacing:0.051px;">a minute</span>
<svg style="position:absolute;left:1173.3px;top:290.7px;width:16px;height:16px" viewBox="0 0 16 16"><polygon points="7.00,1.40 11.38,3.51 12.46,8.25 9.43,12.05 4.57,12.05 1.54,8.25 2.62,3.51" fill="#4a8cf0" stroke="#4a8cf0" stroke-width="1.600" stroke-linejoin="round"/><circle cx="7" cy="7" r="2.91" stroke="#e9f0fc" stroke-width="1.200" fill="none"/><path d="M7.00 5.70L7.00 2.63M8.02 6.19L10.42 4.28M8.27 7.29L11.26 7.97M7.56 8.17L8.90 10.94M6.44 8.17L5.10 10.94M5.73 7.29L2.74 7.97M5.98 6.19L3.58 4.28" stroke="#e9f0fc" stroke-width="1"/><rect x="7" y="8" width="9" height="8" fill="#20212a"/><text x="11.500" y="15" font-size="8.500" font-weight="bold" fill="#b4b7be" text-anchor="middle" font-family="Liberation Sans,sans-serif">{}</text></svg>
<svg style="position:absolute;left:1197.9px;top:290.7px;width:16px;height:16px" viewBox="0 0 16 16"><path d="M7 3H3.500a1 1 0 0 0-1 1v8.500a1 1 0 0 0 1 1H12a1 1 0 0 0 1-1V9.500" stroke="#b4b7be" stroke-width="1.300" fill="none"/><path d="M6.500 9.500L14 2M9.500 2H14v4.500" stroke="#b4b7be" stroke-width="1.300" fill="none"/></svg>
<svg style="position:absolute;left:1222.3px;top:290.7px;width:16px;height:16px" viewBox="0 0 16 16"><path d="M2 4.200h12M6 4V2.500h4V4M3.600 4.200l.7 9.300a1 1 0 0 0 1 1h5.400a1 1 0 0 0 1-1l.7-9.300M6.500 7v4.500M9.500 7v4.500" stroke="#b4b7be" stroke-width="1.300" fill="none"/></svg>
<svg style="position:absolute;left:1247.5px;top:290.7px;width:16px;height:16px" viewBox="0 0 16 16"><path d="M12.500 7V3a1 1 0 0 0-1-1h-8a1 1 0 0 0-1 1v10a1 1 0 0 0 1 1H8M5 5.200h5M5 8h4M5 10.800h2.500" stroke="#b4b7be" stroke-width="1.300" fill="none"/><ellipse cx="12" cy="12" rx="3.500" ry="2.300" stroke="#4a8cf0" stroke-width="1.200" fill="none"/><circle cx="12" cy="12" r="1" fill="#4a8cf0"/></svg>
<svg style="position:absolute;left:1271.6px;top:290.7px;width:16px;height:16px" viewBox="0 0 16 16"><path d="M8 2v8.500M4.500 7L8 10.500 11.500 7M2.500 11v2a1 1 0 0 0 1 1h9a1 1 0 0 0 1-1v-2" stroke="#b4b7be" stroke-width="1.300" fill="none"/></svg>
<svg style="position:absolute;left:1296.5px;top:290.7px;width:16px;height:16px" viewBox="0 0 16 16"><rect x="1.500" y="2.500" width="13" height="11" rx="1.800" stroke="#b4b7be" stroke-width="1.300" fill="none"/><path d="M4.300 6l2.200 2-2.200 2M8 10.500h3.500" stroke="#b4b7be" stroke-width="1.200" fill="none"/></svg>
<svg style="position:absolute;left:1321.2px;top:290.7px;width:16px;height:16px" viewBox="0 0 16 16"><path d="M11.500 4.500V3a1 1 0 0 0-1-1H3a1 1 0 0 0-1 1v6.500a1 1 0 0 0 1 1h1" stroke="#b4b7be" stroke-width="1.300" fill="none"/><rect x="4.200" y="4.800" width="10" height="9.400" rx="1.200" fill="#b4b7be"/><path d="M7.900 7.500l3 2-3 2z" fill="#20212a"/></svg>
<svg style="position:absolute;left:1346.1px;top:290.7px;width:16px;height:16px" viewBox="0 0 16 16"><path d="M1.500 8h8M6.500 4.500L10 8l-3.500 3.500" stroke="#b4b7be" stroke-width="1.300" fill="none"/><circle cx="13" cy="8" r="1.500" stroke="#b4b7be" stroke-width="1.200" fill="none"/></svg>
<svg style="position:absolute;left:1377.3px;top:290.7px;width:16px;height:16px" viewBox="0 0 16 16"><path d="M13.500 7.500A5.500 5.500 0 0 0 3.500 5M2.500 8.500A5.500 5.500 0 0 0 12.500 11" stroke="#b4b7be" stroke-width="1.300" fill="none"/><path d="M3 1.800V5.200h3.400M13 14.200V10.800H9.600" stroke="#b4b7be" stroke-width="1.300" fill="none"/></svg>
<svg style="position:absolute;left:1402.0px;top:290.7px;width:16px;height:16px" viewBox="0 0 16 16"><path d="M2.500 6V3.500a1 1 0 0 1 1-1H6M10 2.500h2.500a1 1 0 0 1 1 1V6M13.500 10v2.500a1 1 0 0 1-1 1H10M6 13.500H3.500a1 1 0 0 1-1-1V10" stroke="#b4b7be" stroke-width="1.300" fill="none"/></svg>
<svg style="position:absolute;left:1426.9px;top:290.7px;width:16px;height:16px" viewBox="0 0 16 16"><polygon points="8.00,1.70 12.93,4.07 14.14,9.40 10.73,13.68 5.27,13.68 1.86,9.40 3.07,4.07" fill="#4a8cf0" stroke="#4a8cf0" stroke-width="1.600" stroke-linejoin="round"/><circle cx="8" cy="8" r="3.28" stroke="#e9f0fc" stroke-width="1.200" fill="none"/><path d="M8.00 6.70L8.00 3.09M9.02 7.19L11.84 4.94M9.27 8.29L12.79 9.09M8.56 9.17L10.13 12.43M7.44 9.17L5.87 12.43M6.73 8.29L3.21 9.09M6.98 7.19L4.16 4.94" stroke="#e9f0fc" stroke-width="1"/></svg>
<svg style="position:absolute;left:1451.5px;top:290.7px;width:16px;height:16px" viewBox="0 0 16 16"><path d="M7 1.500v11M1.500 7h11" stroke="#b4b7be" stroke-width="1.300" fill="none"/><path d="M15.500 11.500v4h-4z" fill="#b4b7be"/></svg>
<svg style="position:absolute;left:1475.9px;top:290.7px;width:16px;height:16px" viewBox="0 0 16 16"><circle cx="8" cy="3" r="1.100" fill="#b4b7be"/><circle cx="8" cy="8" r="1.100" fill="#b4b7be"/><circle cx="8" cy="13" r="1.100" fill="#b4b7be"/></svg>
<div style="position:absolute;left:1369px;top:288px;width:1px;height:21px;background:#34363c"></div>
</div>
</div>
<div id="dlg">
<div style="position:absolute;left:-461px;top:-59px">
<div style="position:absolute;left:468px;top:66.5px;width:12px;height:12px;border-radius:50%;background:#fe5f57"></div>
<div style="position:absolute;left:487px;top:66.5px;width:12px;height:12px;border-radius:50%;background:#4a4b52"></div>
<div style="position:absolute;left:506px;top:66.5px;width:12px;height:12px;border-radius:50%;background:#22c238"></div>
<span class="t" style="left:645.0px;top:62.0px;font-size:13.2px;color:#a9acb2;letter-spacing:-0.289px;font-weight:bold;-webkit-text-stroke:0;">Add Kubernetes Tunnel to Run Configuration</span>
<span class="t" style="left:475.0px;top:98.5px;font-size:13.5px;color:#d0d3d9;letter-spacing:-0.063px;">To debug `PetClinicApplication` remotely in Kubernetes, a copy of this run configuration will be created</span>
<span class="t" style="left:475.0px;top:114.8px;font-size:13.5px;color:#d0d3d9;letter-spacing:-0.103px;white-space:pre;">with Kubernetes tunnel settings added. </span>
<span class="t" style="left:707.4px;top:114.8px;font-size:13.5px;color:#4d8ff0;letter-spacing:-0.431px;text-decoration:underline;">Read more</span>
<svg style="position:absolute;left:772.5px;top:120.5px;width:9px;height:9px" viewBox="0 0 9 9"><path d="M1.500 7.500l6-6M3 1.500h4.500V6" stroke="#a3a6ad" stroke-width="1.100" fill="none"/></svg>
<span class="t" style="left:475.0px;top:166.7px;font-size:13.5px;color:#d0d3d9;letter-spacing:-0.143px;">Kubernetes cluster:</span>
<div style="position:absolute;left:594.3px;top:163.0px;width:491.7px;height:26.7px;background:#2f3037;border:1px solid #3d3e46;border-radius:4px"></div><span class="t" style="left:603.3px;top:166.7px;font-size:13.5px;color:#d3d5db;letter-spacing:-0.253px;">minikube</span><svg style="position:absolute;left:1068.2px;top:171.8px;width:10px;height:10px" viewBox="0 0 10 10"><path d="M1.5 3.500l3.500 3.500 3.500-3.500" stroke="#b4b7be" stroke-width="1.300" fill="none"/></svg>
<span class="t" style="left:475.0px;top:204.6px;font-size:13.5px;color:#d0d3d9;letter-spacing:-0.329px;">Namespace:</span>
<div style="position:absolute;left:594.3px;top:201.2px;width:491.7px;height:26.3px;background:#2f3037;border:1px solid #3d3e46;border-radius:4px"></div><span class="t" style="left:603.3px;top:204.6px;font-size:13.5px;color:#d3d5db;letter-spacing:-0.033px;">default</span><svg style="position:absolute;left:1068.2px;top:209.8px;width:10px;height:10px" viewBox="0 0 10 10"><path d="M1.5 3.500l3.500 3.500 3.500-3.500" stroke="#b4b7be" stroke-width="1.300" fill="none"/></svg>
<svg style="position:absolute;left:596.0px;top:241.0px;width:13px;height:12px" viewBox="0 0 13 12"><path d="M1.500 6.500l3.500 3.500 6.500-8" stroke="#35914f" stroke-width="1.400" fill="none"/></svg>
<span class="t" style="left:625.0px;top:236.7px;font-size:13.5px;color:#35914f;letter-spacing:-0.071px;">Connected to cluster</span>
<span class="t" style="left:475.0px;top:284.0px;font-size:13.5px;color:#d0d3d9;letter-spacing:-0.004px;">Cluster Traffic Interception</span>
<div style="position:absolute;left:640px;top:293px;width:445px;height:1px;background:#33353b"></div>
<span class="t" style="left:497.5px;top:317.0px;font-size:13.5px;color:#d0d3d9;letter-spacing:-0.283px;">Service:</span>
<div style="position:absolute;left:606.6px;top:313.0px;width:479.4px;height:26.7px;background:#2f3037;border:1px solid #3d3e46;border-radius:4px"></div><span class="t" style="left:615.6px;top:317.0px;font-size:13.5px;color:#d3d5db;letter-spacing:0.029px;">spring-petclinic</span><svg style="position:absolute;left:1068.2px;top:321.9px;width:10px;height:10px" viewBox="0 0 10 10"><path d="M1.5 3.500l3.500 3.500 3.500-3.500" stroke="#b4b7be" stroke-width="1.300" fill="none"/></svg>
<span class="t" style="left:497.5px;top:354.7px;font-size:13.5px;color:#d0d3d9;letter-spacing:-0.293px;">Ports:</span>
<div style="position:absolute;left:606px;top:351px;width:138.800px;height:27.500px;background:#17181e;border:2px solid #2e70e0;border-radius:5px"></div>
<span class="t" style="left:615.4px;top:354.7px;font-size:12.31px;color:#d3d5db;font-family:'Liberation Mono',monospace;-webkit-text-stroke:0.4px;">8080</span>
<svg style="position:absolute;left:722.3px;top:357.0px;width:14.5px;height:14.5px" viewBox="0 0 12.500 12.500"><path d="M7.500 1.500H11V5M11 1.500L7 5.500M5 11H1.500V7.500M1.500 11l4-4" stroke="#8f9299" stroke-width="1.100" fill="none"/></svg>
<span class="t" style="left:607.0px;top:380.6px;font-size:12.4px;color:#6c6f77;letter-spacing:-0.143px;">Separate ports by space or comma</span>
<span class="t" style="left:497.5px;top:413.0px;font-size:13.5px;color:#d0d3d9;letter-spacing:-0.031px;">Intercept options:</span>
<div style="position:absolute;left:607px;top:409px;width:478.800px;height:25.800px;background:#1f2028;border:1px solid #45474e;border-radius:4px"></div>
<span class="t" style="left:616.3px;top:413.0px;font-size:12.31px;color:#656870;font-family:'Liberation Mono',monospace;">Optional</span>
<svg style="position:absolute;left:1064.5px;top:415.0px;width:14.5px;height:14.5px" viewBox="0 0 12.500 12.500"><path d="M7.500 1.500H11V5M11 1.500L7 5.500M5 11H1.500V7.500M1.500 11l4-4" stroke="#8f9299" stroke-width="1.100" fill="none"/></svg>
<span class="t" style="left:607.0px;top:438.7px;font-size:12.4px;color:#6c6f77;letter-spacing:-0.076px;">Any additional parameters for the 'telepresence intercept' command</span>
<svg style="position:absolute;left:476.7px;top:488.6px;width:10px;height:10px" viewBox="0 0 10 10"><path d="M3.500 1.500l3.500 3.500-3.500 3.500" stroke="#8c8f96" stroke-width="1.300" fill="none"/></svg>
<span class="t" style="left:494.0px;top:483.6px;font-size:13.5px;color:#d0d3d9;letter-spacing:-0.154px;">Output</span>
<div style="position:absolute;left:541.500px;top:493.500px;width:545px;height:1px;background:#2e3036"></div>
<div style="position:absolute;left:869.300px;top:518.300px;width:67.700px;height:26.400px;border:1px solid #45474e;border-radius:4.500px;background:#1f2028"></div>
<span class="t" style="left:882.5px;top:521.5px;font-size:13.5px;color:#d3d5db;letter-spacing:-0.170px;">Cancel</span>
<div style="position:absolute;left:948.400px;top:518.300px;width:138.200px;height:26.400px;border-radius:4.500px;background:#0c7bff"></div>
<span class="t" style="left:962.0px;top:521.5px;font-size:13.5px;color:#f2f5fa;letter-spacing:-0.212px;">Save Configuration</span>
<svg style="position:absolute;left:846.0px;top:465.0px;width:14px;height:20px" viewBox="0 0 14 20"><path d="M1.500 1.500v13.500l3.300-3 2.300 5.300 2.300-1-2.300-5.200h4.400z" fill="#0a0a0a" stroke="#d6d6da" stroke-width="1.100" stroke-linejoin="round"/></svg>
</div>
</div>
</body></html>
